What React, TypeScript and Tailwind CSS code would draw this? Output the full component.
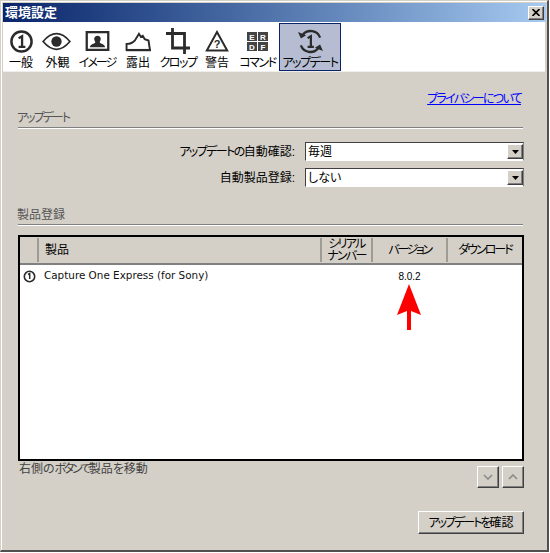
import React from 'react';

const font = 'font-["Liberation_Sans","Noto_Sans_CJK_JP",sans-serif] [font-feature-settings:"palt"]';

const iconClass = 'text-[#2b2b2b]';

const OneIcon = () => (
  <svg width="25" height="25" viewBox="0 0 26 26" className={iconClass}>
    <circle cx="13" cy="13" r="10.5" fill="none" stroke="currentColor" strokeWidth="2.6" />
    <path d="M10 9.5l3.6-2V18M10 18.5h7" fill="none" stroke="currentColor" strokeWidth="2.4" />
  </svg>
);

const EyeIcon = () => (
  <svg width="31" height="19" viewBox="0 0 32 22" className={`${iconClass} -ml-[2px]`}>
    <path d="M0.500 11C6 4.500 10.500 2 16 2S26 4.500 31.500 11C26 17.500 21.500 20 16 20S6 17.500 0.500 11Z" fill="none" stroke="currentColor" strokeWidth="2" />
    <circle cx="16" cy="11" r="6" fill="currentColor" />
  </svg>
);

const PortraitIcon = () => (
  <svg width="25" height="20" viewBox="0 0 25 21" className={iconClass}>
    <rect x="1.200" y="1.200" width="22.600" height="18.600" fill="none" stroke="currentColor" strokeWidth="2.400" />
    <path d="M4.500 17c.5-3 3-3.500 5.500-4.500v-1.500C8.500 9.500 8.500 5 12.500 5s4 4.500 2.500 6v1.500c2.500 1 5 1.500 5.500 4.500Z" fill="currentColor" />
  </svg>
);

const ExposureIcon = () => (
  <svg width="27" height="21" viewBox="0 0 28 22" className={iconClass}>
    <path d="M1.500 13.500c4.500 0 7-1.500 9-4l4-6.500 2 3.200 2-1.200 2 3.500 4 1.500 1.500 10H1.500Z" fill="none" stroke="currentColor" strokeWidth="2" />
    <path d="M1 20h26" stroke="currentColor" strokeWidth="2.400" />
  </svg>
);

const CropIcon = () => (
  <svg width="24" height="26" viewBox="0 0 24 26" className={iconClass}>
    <path d="M6.500 0v20H24M0 5.500h18.500V26" fill="none" stroke="currentColor" strokeWidth="2.800" />
  </svg>
);

const WarnIcon = () => (
  <svg width="24" height="22" viewBox="0 0 24 22" className={iconClass}>
    <path d="M12 2L1.800 20.500h20.400Z" fill="none" stroke="currentColor" strokeWidth="2" />
    <text x="12" y="17.500" textAnchor="middle" fontSize="11" fontWeight="700" fontFamily="Liberation Sans" fill="currentColor">?</text>
  </svg>
);

const CommandIcon = () => (
  <svg width="21" height="19" viewBox="0 0 21 19">
    <rect x="0" y="0" width="10" height="9" fill="#444" />
    <rect x="11" y="0" width="10" height="9" fill="#444" />
    <rect x="0" y="10" width="10" height="9" fill="#444" />
    <rect x="11" y="10" width="10" height="9" fill="#444" />
    <text x="5" y="7.500" textAnchor="middle" fontSize="8" fontWeight="700" fontFamily="Liberation Sans" fill="#fff">E</text>
    <text x="16" y="7.500" textAnchor="middle" fontSize="8" fontWeight="700" fontFamily="Liberation Sans" fill="#fff">R</text>
    <text x="5" y="17.500" textAnchor="middle" fontSize="8" fontWeight="700" fontFamily="Liberation Sans" fill="#fff">D</text>
    <text x="16" y="17.500" textAnchor="middle" fontSize="8" fontWeight="700" fontFamily="Liberation Sans" fill="#fff">F</text>
  </svg>
);

const UpdateIcon = () => (
  <svg width="25" height="25" viewBox="0 0 26 26" className={iconClass}>
    <path d="M5 6A10.500 10.500 0 0 1 23 9M21 20A10.500 10.500 0 0 1 3 17" fill="none" stroke="currentColor" strokeWidth="2.400" />
    <path d="M0 3L3 10L8.500 6.500ZM26 23L23 16L17.500 19.500Z" fill="currentColor" />
    <path d="M10 9.500l3.400-2V18M10 18.500h6.500" fill="none" stroke="currentColor" strokeWidth="2.300" />
  </svg>
);

const tabs = [
  { label: '一般', icon: <OneIcon />, width: 'w-[36px]', spacing: '' },
  { label: '外観', icon: <EyeIcon />, width: 'w-[37px]', spacing: '' },
  { label: 'イメージ', icon: <PortraitIcon />, width: 'w-[42px]', spacing: 'tracking-[-2px]' },
  { label: '露出', icon: <ExposureIcon />, width: 'w-[40px]', spacing: '' },
  { label: 'クロップ', icon: <CropIcon />, width: 'w-[40px]', spacing: 'tracking-[-1.500px]' },
  { label: '警告', icon: <WarnIcon />, width: 'w-[38px]', spacing: '' },
  { label: 'コマンド', icon: <CommandIcon />, width: 'w-[43px]', spacing: 'tracking-[-1.500px]' },
];

const raised =
  'border border-t-white border-l-white border-r-[#404040] border-b-[#404040] bg-[#d4d0c8] shadow-[inset_-1px_-1px_0_#808080]';

const SectionHeader = ({ title, spacing }: { title: string; spacing?: string }) => (
  <div className="mr-[24px] ml-[14px]">
    <div className={`h-[18px] text-[12px] leading-[18px] text-[#555] ${spacing ?? ''}`}>{title}</div>
    <div className="ml-px h-[2px] border-t border-b border-t-[#808080] border-b-white" />
  </div>
);

const SelectRow = ({ label, value }: { label: React.ReactNode; value: string }) => (
  <div className="flex h-[19px] items-center">
    <div className="w-[292px] text-right text-[12px] text-black">{label}:</div>
    <div className="ml-[10px] flex h-[19px] w-[219px] items-center border border-t-[#404040] border-l-[#404040] border-r-[#808080] border-b-white bg-white pl-[2px]">
      <span className="flex-1 text-[12px] leading-none text-black">{value}</span>
      <span className={`flex h-[15px] w-[16px] items-center justify-center ${raised}`}>
        <svg width="7" height="4" viewBox="0 0 7 4">
          <path d="M0 0h7L3.500 4Z" fill="#000" />
        </svg>
      </span>
    </div>
  </div>
);

const HeaderCell = ({ className, children }: { className: string; children?: React.ReactNode }) => (
  <div className={`flex h-[24px] items-center border-r-2 border-r-[#a09c94] text-[12px] text-black ${className}`}>
    {children}
  </div>
);

const SmallButton = ({ up }: { up?: boolean }) => (
  <div className={`flex h-[22px] w-[22px] items-center justify-center ${raised}`}>
    <svg width="10" height="6" viewBox="0 0 10 6">
      <path d={up ? 'M1 5l4-4 4 4' : 'M1 1l4 4 4-4'} fill="none" stroke="#8a8a8a" strokeWidth="1.600" />
    </svg>
  </div>
);

export default function App() {
  return (
    <div className={`h-[553px] w-[550px] bg-white ${font}`}>
      <div className="h-[552px] w-[549px] border-t border-r-2 border-b-2 border-l border-t-[#d4d0c8] border-r-[#505050] border-b-[#505050] border-l-[#d4d0c8] bg-[#d4d0c8]">
        <div className="flex h-full flex-col border-t border-l border-t-white border-l-white pt-px pl-px">
          <div className="mr-px flex h-[19px] shrink-0 items-center justify-between bg-gradient-to-r from-[#0a246a] to-[#a6caf0] pr-[2px] pl-[2px]">
            <span className="text-[13px] font-bold text-white">環境設定</span>
            <span className={`flex h-[14px] w-[16px] items-center justify-center ${raised}`}>
              <svg width="8" height="7" viewBox="0 0 8 7">
                <path d="M0.500 0L7.500 7M7.500 0L0.500 7" stroke="#000" strokeWidth="1.600" />
              </svg>
            </span>
          </div>

          <div className="mr-[2px] flex h-[50px] shrink-0 border-b border-b-[#f0eeea] bg-white">
            {tabs.map((tab) => (
              <div key={tab.label} className={`flex flex-col items-center ${tab.width}`}>
                <div className="flex h-[35px] items-center justify-center pt-[3px]">{tab.icon}</div>
                <div className={`text-[12px] leading-[12px] whitespace-nowrap text-black ${tab.spacing}`}>{tab.label}</div>
              </div>
            ))}
            <div className="mt-px flex h-[48px] w-[62px] flex-col items-center border border-[#0a246a] bg-[#b6bdd2]">
              <div className="flex h-[33px] items-center justify-center pt-px">
                <UpdateIcon />
              </div>
              <div className="text-[12px] leading-[12px] tracking-[-1.500px] whitespace-nowrap text-black">アップデート</div>
            </div>
          </div>

          <div className="flex min-h-0 flex-1 flex-col">
            <div className="mt-[19px] mr-[26px] text-right text-[12px] leading-[16px] tracking-[-1.700px] text-[#0000ff] underline">
              プライバシーについて
            </div>

            <div className="mt-[2px]">
              <SectionHeader title="アップデート" spacing="tracking-[-2px]" />
            </div>

            <div className="mt-[13px] flex flex-col gap-[7px]">
              <SelectRow
                label={
                  <>
                    <span className="tracking-[-1.600px]">アップデートの</span>自動確認
                  </>
                }
                value="毎週"
              />
              <SelectRow label="自動製品登録" value="しない" />
            </div>

            <div className="mt-[19px]">
              <SectionHeader title="製品登録" />
            </div>

            <div className="relative mt-[9px] mr-[23px] ml-[15px] h-[226px] border-2 border-black bg-white">
              <div className="flex h-[28px] items-center border-b-2 border-b-[#808080] bg-[#d4d0c8]">
                <HeaderCell className="w-[19px]" />
                <HeaderCell className="w-[283px] pl-[6px]">製品</HeaderCell>
                <HeaderCell className="w-[51px] justify-center text-center tracking-[-1.700px]">
                  <span className="leading-[12px]">
                    シリアル
                    <br />
                    ナンバー
                  </span>
                </HeaderCell>
                <HeaderCell className="w-[75px] justify-center tracking-[-2.400px]">バージョン</HeaderCell>
                <div className="flex-1 text-center text-[12px] tracking-[-2px] text-black">ダウンロード</div>
              </div>
              <div className="flex h-[22px] items-center">
                <div className="flex w-[19px] justify-center">
                  <svg width="13" height="13" viewBox="0 0 13 13" className={iconClass}>
                    <circle cx="6.500" cy="6.500" r="5.200" fill="none" stroke="currentColor" strokeWidth="1.600" />
                    <path d="M5 4.500l1.700-1v5.500" fill="none" stroke="currentColor" strokeWidth="1.500" />
                  </svg>
                </div>
                <div className="w-[333px] pl-[5px] font-['DejaVu_Sans'] text-[10.400px] text-[#111]">
                  Capture One Express (for Sony)
                </div>
                <div className="w-[75px] text-center text-[10px] text-black">8.0.2</div>
              </div>
              <svg
                width="26"
                height="48"
                viewBox="0 0 26 48"
                className="absolute top-[47px] left-[376px]"
              >
                <path d="M13 0L25 31L15 27V46H11V27L1 31Z" fill="#ff0000" />
              </svg>
            </div>

            <div className="mr-[23px] ml-[16px] flex items-start justify-between">
              <div className="text-[12px] leading-[16px] text-[#444]">
                右側の<span className="tracking-[-2.400px]">ボタンで</span>製品を移動
              </div>
              <div className="mt-[5px] flex gap-[3px]">
                <SmallButton />
                <SmallButton up />
              </div>
            </div>

            <div className="mt-[23px] mr-[23px] flex justify-end">
              <div className={`flex h-[23px] w-[106px] items-center justify-center text-[12px] text-black ${raised}`}>
                <span className="tracking-[-2px]">アップデートを</span>確認
              </div>
            </div>
          </div>
        </div>
      </div>
    </div>
  );
}
